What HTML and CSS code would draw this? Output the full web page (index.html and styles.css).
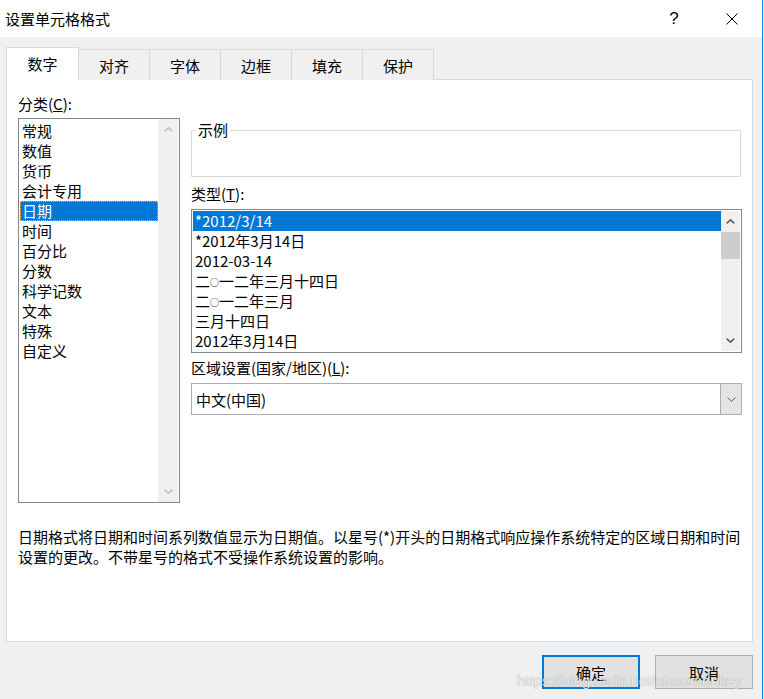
FILE: index.html
```html
<!DOCTYPE html>
<html lang="zh">
<head>
    <meta charset="UTF-8">
    <title>设置单元格格式</title>
    <link rel="stylesheet" href="styles.css">
</head>
<body>
    <div class="dialog">
        <div class="titlebar">
            <div class="title">设置单元格格式</div>
            <div class="caption-btn help">?</div>
            <div class="caption-btn close">
                <svg width="12" height="12" viewBox="0 0 12 12"><path d="M0.5 0.5L11.5 11.5M11.5 0.5L0.5 11.5" stroke="#000" stroke-width="1" fill="none"/></svg>
            </div>
        </div>

        <div class="tabs">
            <div class="tab active">数字</div>
            <div class="tab">对齐</div>
            <div class="tab">字体</div>
            <div class="tab">边框</div>
            <div class="tab">填充</div>
            <div class="tab">保护</div>
        </div>

        <div class="panel">
            <div class="panel-main">
                <!-- 分类 -->
                <div class="category">
                    <div class="label">分类(<u>C</u>):</div>
                    <div class="listbox category-list">
                        <div class="list-items">
                            <div class="item">常规</div>
                            <div class="item">数值</div>
                            <div class="item">货币</div>
                            <div class="item">会计专用</div>
                            <div class="item selected focused">日期</div>
                            <div class="item">时间</div>
                            <div class="item">百分比</div>
                            <div class="item">分数</div>
                            <div class="item">科学记数</div>
                            <div class="item">文本</div>
                            <div class="item">特殊</div>
                            <div class="item">自定义</div>
                        </div>
                        <div class="scrollbar disabled">
                            <div class="sb-btn">
                                <svg width="9" height="5" viewBox="0 0 9 5"><polyline points="0.6,4.4 4.5,0.8 8.4,4.4" fill="none" stroke="currentColor" stroke-width="1.6"/></svg>
                            </div>
                            <div class="sb-track"></div>
                            <div class="sb-btn">
                                <svg width="9" height="5" viewBox="0 0 9 5"><polyline points="0.6,0.6 4.5,4.2 8.4,0.6" fill="none" stroke="currentColor" stroke-width="1.6"/></svg>
                            </div>
                        </div>
                    </div>
                </div>

                <!-- 右侧 -->
                <div class="details">
                    <fieldset class="sample">
                        <legend>示例</legend>
                        <div class="sample-body"></div>
                    </fieldset>

                    <div class="label type-label">类型(<u>T</u>):</div>
                    <div class="listbox type-list">
                        <div class="list-items">
                            <div class="item selected">*2012/3/14</div>
                            <div class="item">*2012年3月14日</div>
                            <div class="item">2012-03-14</div>
                            <div class="item">二<span class="zero">○</span>一二年三月十四日</div>
                            <div class="item">二<span class="zero">○</span>一二年三月</div>
                            <div class="item">三月十四日</div>
                            <div class="item">2012年3月14日</div>
                        </div>
                        <div class="scrollbar">
                            <div class="sb-btn">
                                <svg width="9" height="5" viewBox="0 0 9 5"><polyline points="0.6,4.4 4.5,0.8 8.4,4.4" fill="none" stroke="currentColor" stroke-width="1.6"/></svg>
                            </div>
                            <div class="sb-track">
                                <div class="sb-thumb"></div>
                            </div>
                            <div class="sb-btn">
                                <svg width="9" height="5" viewBox="0 0 9 5"><polyline points="0.6,0.6 4.5,4.2 8.4,0.6" fill="none" stroke="currentColor" stroke-width="1.6"/></svg>
                            </div>
                        </div>
                    </div>

                    <div class="label region-label">区域设置(国家/地区)(<u>L</u>):</div>
                    <div class="combo">
                        <div class="combo-value">中文(中国)</div>
                        <div class="combo-btn">
                            <svg width="9" height="5" viewBox="0 0 9 5"><polyline points="0.5,0.5 4.5,4.3 8.5,0.5" fill="none" stroke="#606060" stroke-width="1"/></svg>
                        </div>
                    </div>
                </div>
            </div>

            <p class="description">日期格式将日期和时间系列数值显示为日期值。以星号(*)开头的日期格式响应操作系统特定的区域日期和时间设置的更改。不带星号的格式不受操作系统设置的影响。</p>
        </div>

        <div class="footer">
            <button class="btn btn-default">确定</button>
            <button class="btn">取消</button>
        </div>

        <div class="watermark">https://blog.csdn.net/ciscomonkey</div>
    </div>
</body>
</html>
```

FILE: styles.css
```css
body {
    margin: 0;
    font-family: "Noto Sans CJK SC", sans-serif;
    font-size: 15px;
    color: #000;
    background-color: #f0f0f0;
    overflow: hidden;
}
.dialog {
    position: relative;
    width: 763px;
    height: 699px;
    border-right: 1px solid #1883d7;
    box-sizing: border-box;
    overflow: hidden;
}
/* 标题栏 */
.titlebar {
    display: flex;
    align-items: center;
    height: 37px;
    padding: 0 7px 0 5px;
    background-color: #fff;
}
.title {
    flex: 1;
    line-height: 20px;
}
.caption-btn {
    width: 46px;
    height: 37px;
    display: flex;
    align-items: center;
    justify-content: center;
}
.help {
    margin-right: 12px;
    font-family: "Liberation Sans", sans-serif;
    font-size: 17px;
}
/* 选项卡 */
.tabs {
    display: flex;
    align-items: flex-end;
    height: 33px;
    margin-top: 10px;
    margin-bottom: -1px;
    padding-left: 6px;
}
.tab {
    width: 72px;
    height: 31px;
    margin-left: -1px;
    padding-top: 6px;
    box-sizing: border-box;
    border: 1px solid #d9d9d9;
    border-bottom: none;
    background-color: #f0f0f0;
    line-height: 20px;
    text-align: center;
}
.tab.active {
    position: relative;
    z-index: 1;
    width: 73px;
    height: 33px;
    margin-left: 0;
    padding-top: 6px;
    background-color: #fff;
}
.panel {
    width: 747px;
    height: 563px;
    margin-left: 6px;
    padding: 14px 0 0 11px;
    box-sizing: border-box;
    background-color: #fff;
    border: 1px solid #d9d9d9;
}
.panel-main {
    display: flex;
    gap: 11px;
}
.label {
    height: 20px;
    line-height: 20px;
}
/* 列表框 */
.listbox {
    display: flex;
    box-sizing: border-box;
    border: 1px solid #828790;
    background-color: #fff;
}
.list-items {
    flex: 1;
    padding-left: 1px;
}
.item {
    height: 20px;
    line-height: 20px;
    padding-left: 2px;
    white-space: nowrap;
}
.item .zero {
    font-size: 9px;
    vertical-align: 1px;
}
.item.selected {
    background-color: #0078d7;
    color: #fff;
}
.item.focused {
    outline: 1px dotted #f0b060;
    outline-offset: -1px;
}
.scrollbar {
    display: flex;
    flex-direction: column;
    width: 19px;
    margin: 1px 1px 1px 0;
    background-color: #f0f0f0;
    color: #606060;
}
.scrollbar.disabled {
    color: #c1c1c1;
}
.sb-btn {
    height: 21px;
    display: flex;
    align-items: center;
    justify-content: center;
}
.sb-track {
    flex: 1;
}
.sb-thumb {
    height: 27px;
    background-color: #cdcdcd;
}
.category {
    width: 162px;
}
.category-list {
    height: 385px;
    margin-top: 4px;
}
.category-list .list-items {
    padding-top: 2px;
}
.category-list .scrollbar {
    width: 20px;
    margin: 0 1px 0 0;
}
.details {
    width: 551px;
}
/* 示例 */
.sample {
    margin: 26px 1px 0 0;
    padding: 0 4px;
    min-width: 0;
    border: 1px solid #dcdcdc;
}
.sample legend {
    padding: 0 2px;
    line-height: 20px;
}
.sample-body {
    height: 36px;
}
.type-label {
    margin-top: 7px;
}
.type-list {
    height: 144px;
    margin-top: 5px;
}
.type-list .list-items {
    padding-top: 1px;
}
.region-label {
    margin-top: 5px;
}
.combo {
    display: flex;
    height: 32px;
    margin-top: 5px;
    box-sizing: border-box;
    border: 1px solid #adadad;
}
.combo-value {
    flex: 1;
    padding: 6px 0 0 4px;
    line-height: 20px;
}
.combo-btn {
    width: 20px;
    display: flex;
    align-items: center;
    justify-content: center;
    background-color: #e5e5e5;
    border-left: 1px solid #adadad;
}
.description {
    max-width: 730px;
    margin: 24px 0 0 0;
    line-height: 20px;
}
/* 底部按钮 */
.footer {
    display: flex;
    justify-content: flex-end;
    gap: 15px;
    margin-top: 13px;
    padding-right: 9px;
}
.btn {
    width: 98px;
    height: 34px;
    padding: 0;
    font-family: inherit;
    font-size: 15px;
    background-color: #e1e1e1;
    border: 1px solid #adadad;
    color: #000;
}
.btn-default {
    border: 2px solid #0078d7;
}
.watermark {
    position: absolute;
    left: 517px;
    top: 672px;
    font-family: "Liberation Sans", sans-serif;
    font-size: 15px;
    line-height: 18px;
    color: rgba(255, 255, 255, 0.85);
    text-shadow: 0 0 1px rgba(0, 0, 0, 0.45);
}
```
